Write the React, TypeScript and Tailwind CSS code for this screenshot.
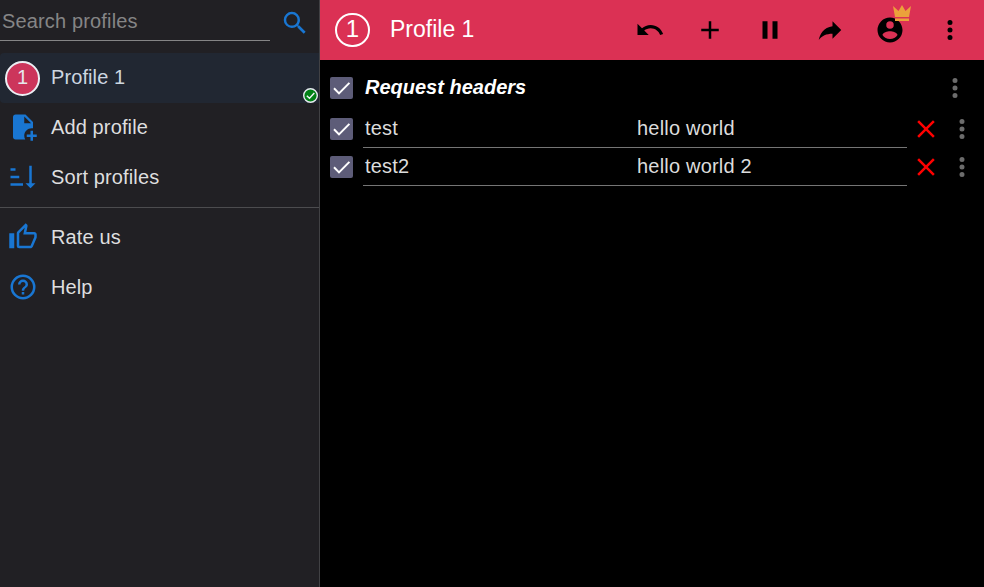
const icons = {
  search: 'M9.5,3A6.5,6.5 0 0,1 16,9.5C16,11.11 15.41,12.59 14.44,13.73L14.71,14H15.5L20.5,19L19,20.5L14,15.5V14.71L13.73,14.44C12.59,15.41 11.11,16 9.5,16A6.5,6.5 0 0,1 3,9.5A6.5,6.5 0 0,1 9.5,3M9.5,5C7,5 5,7 5,9.5C5,12 7,14 9.5,14C12,14 14,12 14,9.5C14,7 12,5 9.5,5Z',
  filePlus: 'M14 2H6C4.89 2 4 2.89 4 4V20C4 21.11 4.89 22 6 22H13.81C13.28 21.09 13 20.05 13 19C13 15.69 15.69 13 19 13C19.34 13 19.67 13.03 20 13.08V8L14 2M13 9V3.5L18.5 9H13M23 20H20V23H18V20H15V18H18V15H20V18H23V20Z',
  sort: 'M19 17H22L18 21L14 17H17V3H19M2 17H12V19H2M6 5V7H2V5M2 11H9V13H2V11Z',
  thumb: 'M5,9V21H1V9H5M9,21A2,2 0 0,1 7,19V9C7,8.45 7.22,7.95 7.59,7.59L14.17,1L15.23,2.06C15.5,2.33 15.67,2.7 15.67,3.11L15.64,3.43L14.69,8H21C22.11,8 23,8.9 23,10V12C23,12.26 22.95,12.5 22.86,12.73L19.84,19.78C19.54,20.5 18.83,21 18,21H9M9,19H18.03L21,12V10H12.21L13.34,4.68L9,9.03V19Z',
  help: 'M11,18H13V16H11V18M12,2A10,10 0 0,0 2,12A10,10 0 0,0 12,22A10,10 0 0,0 22,12A10,10 0 0,0 12,2M12,20C7.59,20 4,16.41 4,12C4,7.59 7.59,4 12,4C16.41,4 20,7.59 20,12C20,16.41 16.41,20 12,20M12,6A4,4 0 0,0 8,10H10A2,2 0 0,1 12,8A2,2 0 0,1 14,10C14,12 11,11.75 11,15H13C13,12.75 16,12.5 16,10A4,4 0 0,0 12,6Z',
  undo: 'M12.5,8C9.85,8 7.45,9 5.6,10.6L2,7V16H11L7.38,12.38C8.77,11.22 10.54,10.5 12.5,10.5C16.04,10.5 19.08,12.81 20.13,16L22.5,15.22C21.11,11.03 17.15,8 12.5,8Z',
  plus: 'M19,13H13V19H11V13H5V11H11V5H13V11H19V13Z',
  pause: 'M14,19H18V5H14M6,19H10V5H6V19Z',
  share: 'M21,12L14,5V9C7,10 4,15 3,20C5.5,16.5 9,14.9 14,14.9V19L21,12Z',
  account: 'M12,19.2C9.5,19.2 7.29,17.92 6,16C6.03,14 10,12.9 12,12.9C14,12.9 17.97,14 18,16C16.71,17.92 14.5,19.2 12,19.2M12,5A3,3 0 0,1 15,8A3,3 0 0,1 12,11A3,3 0 0,1 9,8A3,3 0 0,1 12,5M12,2A10,10 0 0,0 2,12A10,10 0 0,0 12,22A10,10 0 0,0 22,12C22,6.47 17.5,2 12,2Z',
  crown: 'M5 16L3 5L8.5 10L12 4L15.5 10L21 5L19 16H5M19 20H5V17.4H19V20Z',
  dots: 'M12,16A2,2 0 0,1 14,18A2,2 0 0,1 12,20A2,2 0 0,1 10,18A2,2 0 0,1 12,16M12,10A2,2 0 0,1 14,12A2,2 0 0,1 12,14A2,2 0 0,1 10,12A2,2 0 0,1 12,10M12,4A2,2 0 0,1 14,6A2,2 0 0,1 12,8A2,2 0 0,1 10,6A2,2 0 0,1 12,4Z',
  close: 'M19,6.41L17.59,5L12,10.59L6.41,5L5,6.41L10.59,12L5,17.59L6.41,19L12,13.41L17.59,19L19,17.59L13.41,12L19,6.41Z',
};

type IconName = keyof typeof icons;

function Icon({ name, className = '' }: { name: IconName; className?: string }) {
  return (
    <svg viewBox="0 0 24 24" fill="currentColor" className={`shrink-0 ${className || 'size-[30px]'}`}>
      <path d={icons[name]} />
    </svg>
  );
}

function Checkbox() {
  return (
    <span className="h-[22px] w-[23px] shrink-0 rounded-[2px] bg-[#5d5c78]">
      <svg viewBox="0 0 23 22" className="h-[22px] w-[23px]" fill="none" stroke="white" strokeWidth="2">
        <path d="M4 11.3L9 16.4L19.4 5.9" />
      </svg>
    </span>
  );
}

function MenuItem({ icon, label }: { icon: IconName; label: string }) {
  return (
    <button className="flex h-[50px] w-full items-center pl-2 text-left text-[#dededf]">
      <Icon name={icon} className="size-[30px] text-[#1976d2]" />
      <span className="ml-[13px] tracking-[0.12px]">{label}</span>
    </button>
  );
}

function HeaderRow({ name, value }: { name: string; value: string }) {
  return (
    <div className="flex h-[38px] items-center pl-[10px]">
      <Checkbox />
      <div className="ml-[10px] flex h-[38px] w-[544px] items-center border-b border-[#757575] pb-[2px] pl-[2px] tracking-[0.2px] text-[#dcdcdc]">
        <span className="w-[272px]">{name}</span>
        <span>{value}</span>
      </div>
      <Icon name="close" className="ml-1 size-[30px] text-[#ff0000]" />
      <Icon name="dots" className="ml-[6px] size-[30px] text-[#6c6c6c]" />
    </div>
  );
}

const actions: IconName[] = ['undo', 'plus', 'pause', 'share', 'account', 'dots'];

export default function App() {
  return (
    <div className="flex h-[587px] w-[984px] overflow-hidden bg-black font-['Liberation_Sans',Arial,sans-serif] text-[20px] leading-[24px]">
      <aside className="w-80 shrink-0 border-r border-[#414144] bg-[#212024]">
        <div className="flex h-[53px] items-start">
          <div className="h-[41px] w-[270px] border-b border-[#858586] pt-[9px] pl-[2px] tracking-[0.15px] text-[#858586]">Search profiles</div>
          <Icon name="search" className="mt-2 ml-[10px] size-[30px] text-[#1976d2]" />
        </div>
        <div className="relative flex h-[50px] items-center rounded-l-[4px] bg-[#212732] pl-[5px] text-[#cdd6e0]">
          <span className="flex size-[35px] items-center justify-center rounded-full border-2 border-[#eceff4] bg-[#cc355b] pb-[2px] text-[#e6e8ee]">1</span>
          <span className="ml-[11px] -mt-[2px] tracking-[0.1px]">Profile 1</span>
          <svg viewBox="0 0 16 16" className="absolute right-0 bottom-0 size-4" fill="none">
            <circle cx="7.5" cy="8.5" r="6.8" fill="#008015" stroke="#e6eaf0" strokeWidth="1.4" />
            <path d="M3.8 8.7L6.5 11.2L11.3 6" stroke="#f0f4f8" strokeWidth="1.4" />
          </svg>
        </div>
        <nav>
          <div className="-mt-px">
            <MenuItem icon="filePlus" label="Add profile" />
            <MenuItem icon="sort" label="Sort profiles" />
          </div>
          <div className="mt-[5px] mb-1 border-t border-[#4c4c4f]" />
          <MenuItem icon="thumb" label="Rate us" />
          <MenuItem icon="help" label="Help" />
        </nav>
      </aside>

      <main className="min-w-0 flex-1">
        <header className="flex h-[60px] items-center bg-[#db3154] pl-[15px] text-white">
          <span className="flex h-[34px] w-[35px] items-center justify-center rounded-full border-2 border-white pb-[2px] text-[24px]">1</span>
          <h1 className="ml-5 -mt-[2px] flex-1 text-[23px]">Profile 1</h1>
          <div className="flex pr-1 text-black">
            {actions.map((name) => (
              <button key={name} className="relative flex size-[60px] items-center justify-center">
                <Icon name={name} />
                {name === 'account' && (
                  <Icon name="crown" className="absolute top-[0.6px] left-[30px] size-6 text-[#eba13b]" />
                )}
              </button>
            ))}
          </div>
        </header>
        <div className="flex h-[50px] items-center pt-[6px] pl-[10px]">
          <Checkbox />
          <h2 className="-mt-[2px] ml-[12px] flex-1 font-bold text-white italic">Request headers</h2>
          <Icon name="dots" className="mr-[14px] size-[30px] text-[#6c6c6c]" />
        </div>
        <HeaderRow name="test" value="hello world" />
        <HeaderRow name="test2" value="hello world 2" />
      </main>
    </div>
  );
}
